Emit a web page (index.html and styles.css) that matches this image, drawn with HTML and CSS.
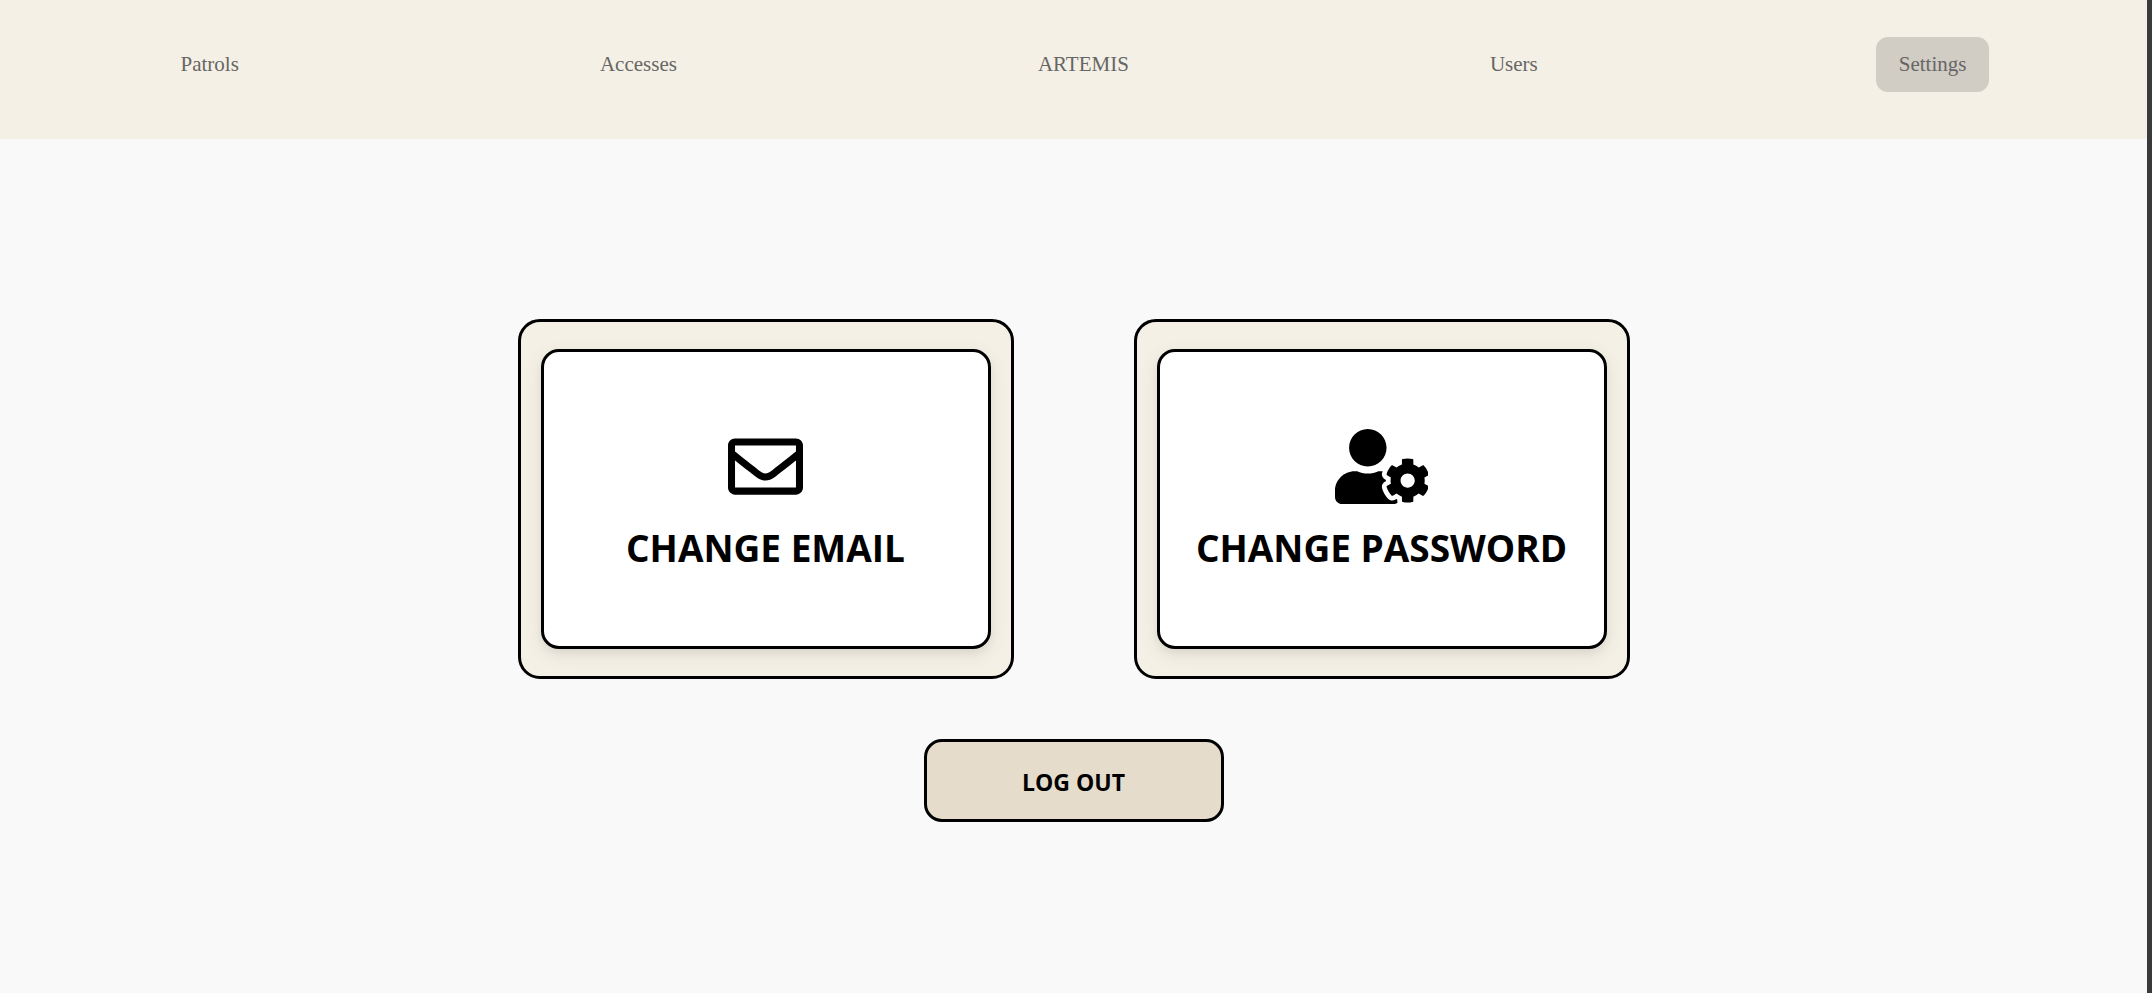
FILE: index.html
```html
<!DOCTYPE html>
<html lang="en">
<head>
<meta charset="utf-8">
<meta name="viewport" content="width=device-width, initial-scale=1">
<title>Settings</title>
<link rel="stylesheet" href="styles.css">
</head>
<body class="page">
  <header class="header">
    <nav class="nav">
      <a class="nav-link" href="#patrols">Patrols</a>
      <a class="nav-link" href="#accesses">Accesses</a>
      <a class="nav-link" href="#artemis">ARTEMIS</a>
      <a class="nav-link" href="#users">Users</a>
      <a class="nav-link nav-link-active" href="#settings" aria-current="page">Settings</a>
    </nav>
  </header>
  <main class="main">
    <div class="cards">
      <div class="card">
        <button class="card-button" type="button">
          <svg class="icon" viewBox="0 0 512 512" aria-hidden="true"><path d="M464 64H48C21.49 64 0 85.49 0 112v288c0 26.51 21.49 48 48 48h416c26.51 0 48-21.49 48-48V112c0-26.51-21.49-48-48-48zm0 48v40.805c-22.422 18.259-58.168 46.651-134.587 106.49-16.841 13.247-50.201 45.072-73.413 44.701-23.208.375-56.579-31.459-73.413-44.701C106.18 199.465 70.425 171.067 48 152.805V112h416zM48 400V214.398c22.914 18.251 55.409 43.862 104.938 82.646 21.857 17.205 60.134 55.186 103.062 54.955 42.717.231 80.509-37.199 103.053-54.947 49.528-38.783 82.032-64.401 104.947-82.653V400H48z"/></svg>
          <span class="card-title">CHANGE EMAIL</span>
        </button>
      </div>
      <div class="card">
        <button class="card-button" type="button">
          <svg class="icon" viewBox="0 0 640 512" aria-hidden="true"><path d="M610.5 373.3c2.6-14.1 2.6-28.5 0-42.6l25.8-14.9c3-1.7 4.3-5.2 3.3-8.5-6.7-21.6-18.2-41.2-33.2-57.4-2.3-2.5-6-3.1-9-1.4l-25.8 14.9c-10.9-9.3-23.4-16.5-36.9-21.3v-29.8c0-3.4-2.4-6.4-5.7-7.1-22.3-5-45-4.8-66.2 0-3.3.7-5.7 3.7-5.7 7.1v29.8c-13.5 4.8-26 12-36.9 21.3l-25.8-14.9c-2.9-1.7-6.7-1.1-9 1.4-15 16.2-26.5 35.8-33.2 57.4-1 3.3.4 6.8 3.3 8.5l25.8 14.9c-2.6 14.1-2.6 28.5 0 42.6l-25.8 14.9c-3 1.7-4.3 5.2-3.3 8.5 6.7 21.6 18.2 41.1 33.2 57.4 2.3 2.5 6 3.1 9 1.4l25.8-14.9c10.9 9.3 23.4 16.5 36.9 21.3v29.8c0 3.4 2.4 6.4 5.7 7.1 22.3 5 45 4.8 66.2 0 3.3-.7 5.7-3.7 5.7-7.1v-29.8c13.5-4.8 26-12 36.9-21.3l25.8 14.9c2.9 1.7 6.7 1.1 9-1.4 15-16.2 26.5-35.8 33.2-57.4 1-3.3-.4-6.8-3.3-8.5l-25.8-14.9zM496 400.5c-26.8 0-48.5-21.8-48.5-48.5s21.8-48.5 48.5-48.5 48.5 21.8 48.5 48.5-21.7 48.5-48.5 48.5zM224 256c70.7 0 128-57.3 128-128S294.7 0 224 0 96 57.3 96 128s57.3 128 128 128zm201.2 226.5c-2.3-1.2-4.6-2.6-6.8-3.9l-7.9 4.6c-6 3.4-12.8 5.3-19.6 5.3-10.9 0-21.4-4.6-28.9-12.6-18.3-19.8-32.3-43.9-40.2-69.6-5.5-17.7 1.9-36.4 17.9-45.7l7.9-4.6c-.1-2.6-.1-5.2 0-7.8l-7.9-4.6c-16-9.2-23.4-28-17.9-45.7.9-2.9 2.2-5.8 3.2-8.7-3.8-.3-7.5-1.2-11.4-1.2h-16.7c-22.2 10.2-46.9 16-72.9 16s-50.6-5.8-72.9-16h-16.7C60.2 288 0 348.2 0 422.4V464c0 26.5 21.5 48 48 48h352c10.1 0 19.5-3.2 27.2-8.5-1.2-3.8-2-7.7-2-11.8v-9.2z"/></svg>
          <span class="card-title">CHANGE PASSWORD</span>
        </button>
      </div>
    </div>
    <button class="logout" type="button">LOG OUT</button>
  </main>
</body>
</html>
```
FILE: styles.css
```css
* {
  box-sizing: border-box;
}

.page {
  margin: 0;
  min-height: 100vh;
  background: #f9f9f9;
  border-right: 5px solid #383a3b;
  font-family: "Open Sans", "Noto Sans", sans-serif;
  color: #000;
}

.header {
  padding: 37px 0 47px;
  background: #f5f0e5;
}

.nav {
  display: flex;
  justify-content: space-around;
}

.nav-link {
  padding: 16px 23px;
  border-radius: 12px;
  font-family: "Liberation Serif", serif;
  font-size: 21px;
  line-height: 23px;
  color: #666;
  text-decoration: none;
}

.nav-link-active {
  background: #d1ccc4;
}

.main {
  display: flex;
  flex-direction: column;
  align-items: center;
  gap: 60px;
  padding: 180px 24px 60px;
}

.cards {
  display: flex;
  flex-wrap: wrap;
  justify-content: center;
  gap: 60px 120px;
}

.card {
  padding: 27px 20px;
  border: 3px solid #000;
  border-radius: 22px;
  background: #f5f0e5;
}

.card-button {
  display: flex;
  flex-direction: column;
  align-items: center;
  justify-content: center;
  gap: 22px;
  width: 450px;
  height: 300px;
  padding: 0;
  border: 3px solid #000;
  border-radius: 18px;
  background: #fff;
  box-shadow: 0 4px 8px rgba(0, 0, 0, 0.05), 0 6px 20px rgba(0, 0, 0, 0.07);
  font-family: inherit;
  color: inherit;
  cursor: pointer;
}

.icon {
  height: 75px;
  fill: currentColor;
}

.card-title {
  font-size: 37px;
  font-weight: 700;
  line-height: 44px;
  white-space: nowrap;
}

.logout {
  width: 300px;
  padding: 24px 20px 21px;
  border: 3px solid #000;
  border-radius: 18px;
  background: #e6dccb;
  font-family: inherit;
  font-size: 23px;
  font-weight: 700;
  line-height: 32px;
  color: inherit;
  cursor: pointer;
}
```
